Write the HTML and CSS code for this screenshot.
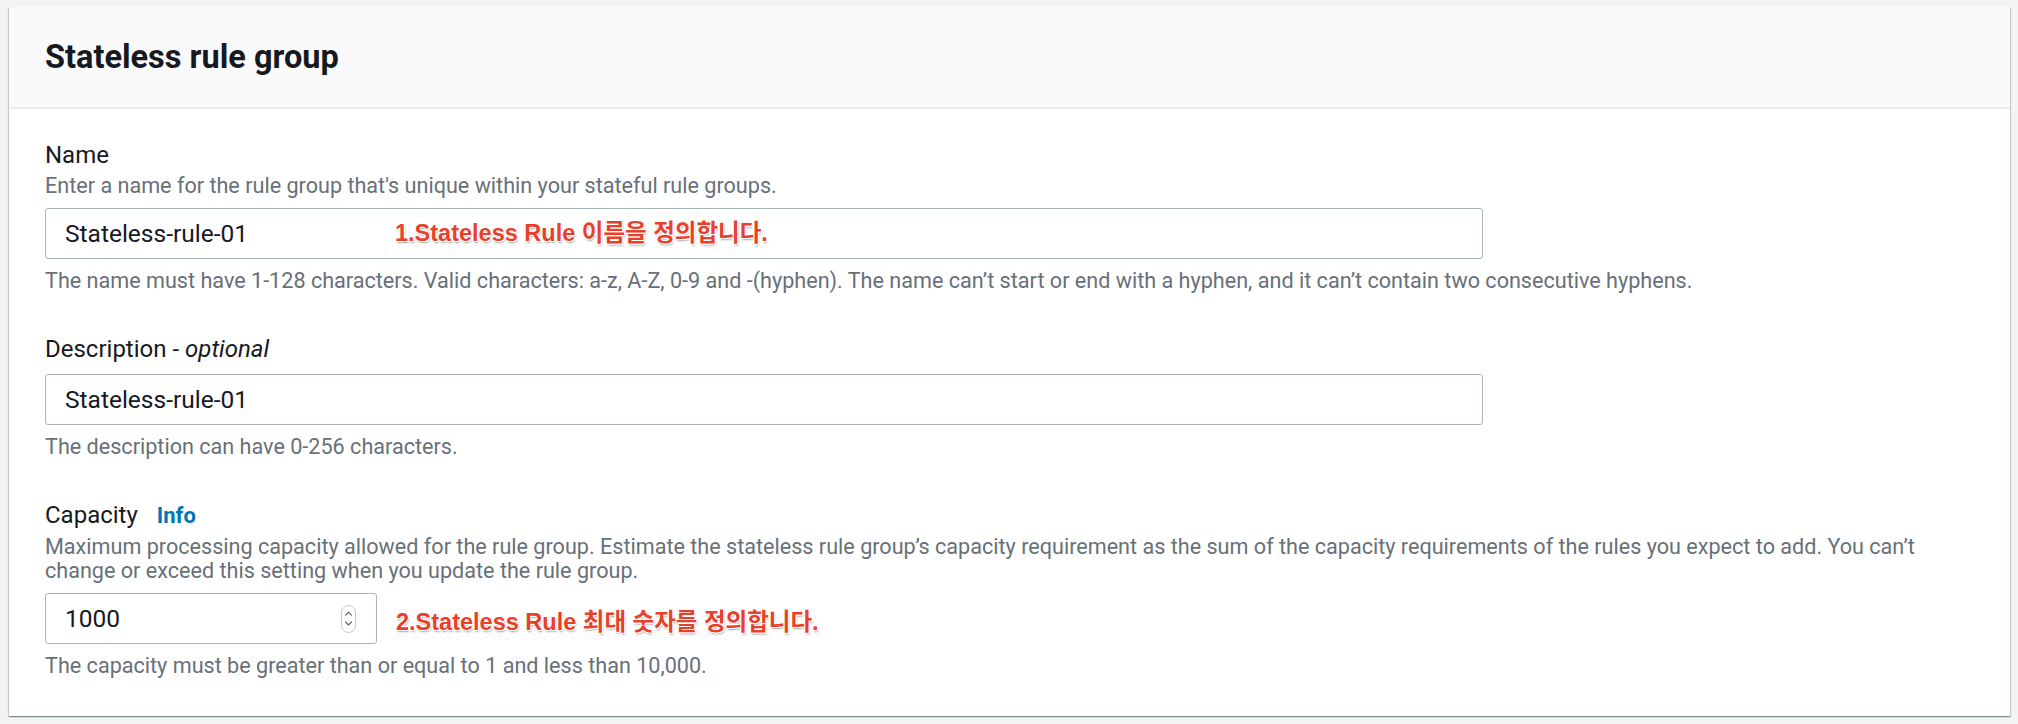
FILE: index.html
```html
<!DOCTYPE html>
<html lang="en">
<head>
<meta charset="utf-8">
<title>Stateless rule group</title>
<link rel="stylesheet" href="styles.css">
</head>
<body>
<section class="card">
  <header class="card-header">
    <h2 class="card-title">Stateless rule group</h2>
  </header>
  <div class="card-body">
    <div class="field">
      <div class="label">Name</div>
      <div class="desc">Enter a name for the rule group that's unique within your stateful rule groups.</div>
      <div class="input-row">
        <div class="input wide">
          <span class="value">Stateless-rule-01</span>
          <span class="note note-1">1.Stateless Rule 이름을 정의합니다.</span>
        </div>
      </div>
      <div class="hint">The name must have 1-128 characters. Valid characters: a-z, A-Z, 0-9 and -(hyphen). The name can’t start or end with a hyphen, and it can’t contain two consecutive hyphens.</div>
    </div>
    <div class="field">
      <div class="label">Description - <em>optional</em></div>
      <div class="input-row">
        <div class="input wide"><span class="value">Stateless-rule-01</span></div>
      </div>
      <div class="hint">The description can have 0-256 characters.</div>
    </div>
    <div class="field">
      <div class="label">Capacity<a class="info">Info</a></div>
      <div class="desc">Maximum processing capacity allowed for the rule group. Estimate the stateless rule group’s capacity requirement as the sum of the capacity requirements of the rules you expect to add. You can’t change or exceed this setting when you update the rule group.</div>
      <div class="input-row">
        <div class="input narrow">
          <span class="value">1000</span>
          <svg class="spinner" width="15" height="28" viewBox="0 0 15 28" aria-hidden="true">
            <rect x="0.5" y="0.5" width="14" height="27" rx="7" fill="#fff" stroke="#c6c9cc"/>
            <path d="M4.5 10.2 L7.5 7.2 L10.5 10.2" fill="none" stroke="#5f6368" stroke-width="1.1" stroke-linecap="round" stroke-linejoin="round"/>
            <path d="M4.5 17 L7.5 20 L10.5 17" fill="none" stroke="#5f6368" stroke-width="1.1" stroke-linecap="round" stroke-linejoin="round"/>
          </svg>
        </div>
        <span class="note note-2">2.Stateless Rule 최대 숫자를 정의합니다.</span>
      </div>
      <div class="hint">The capacity must be greater than or equal to 1 and less than 10,000.</div>
    </div>
  </div>
</section>
</body>
</html>
```
FILE: styles.css
```css
html, body { margin: 0; padding: 0; }
body {
  background: #f2f3f3;
  padding: 7px 8px 9px 9px;
  font-family: Roboto, "Liberation Sans", sans-serif;
  color: #16191f;
}
.card {
  background: #fff;
  box-shadow: 0 1px 1px 0 rgba(0,28,36,.3), 1px 1px 1px 0 rgba(0,28,36,.15), -1px 1px 1px 0 rgba(0,28,36,.15);
}
.card-header {
  background: #fafafa;
  border-bottom: 2px solid #eaeded;
  padding: 30px 36px;
}
.card-title {
  margin: 0;
  font-size: 32.5px;
  line-height: 40px;
  font-weight: 700;
  color: #16191f;
}
.card-body { padding: 31px 38px 38px 36px; }
.field { margin-bottom: 41px; }
.field:last-child { margin-bottom: 0; }
.label { font-size: 24px; line-height: 30px; }
.label em { font-style: italic; }
.desc, .hint {
  font-size: 21.6px;
  line-height: 24px;
  color: #687078;
}
.desc { margin-top: 4px; }
.input-row {
  display: flex;
  align-items: center;
  margin: 10px 0;
}
.input {
  position: relative;
  box-sizing: border-box;
  height: 51px;
  border: 1px solid #aab7b8;
  border-radius: 3px;
  display: flex;
  align-items: center;
  padding: 0 19px;
  font-size: 24.5px;
  color: #16191f;
}
.input.wide { width: 1438px; }
.input.narrow {
  width: 332px;
  justify-content: space-between;
  padding-right: 20px;
}
.spinner { display: block; }
.info {
  color: #0073bb;
  font-weight: 700;
  font-size: 22px;
  margin-left: 19px;
}
.note {
  font-family: "Liberation Sans", Arial, "Noto Sans CJK KR", sans-serif;
  font-weight: 700;
  font-size: 23.5px;
  line-height: 26px;
  color: #e8402b;
  white-space: nowrap;
  text-shadow: 1px 0 0 #fff, -1px 0 0 #fff, 0 1px 0 #fff, 0 -1px 0 #fff,
               1px 1px 0 #fff, -1px -1px 0 #fff, 1px 2px 2px rgba(0,0,0,.35);
}
.note-1 { position: absolute; left: 349px; top: 11px; }
.note-2 { margin-left: 19px; margin-top: 6px; }
```
